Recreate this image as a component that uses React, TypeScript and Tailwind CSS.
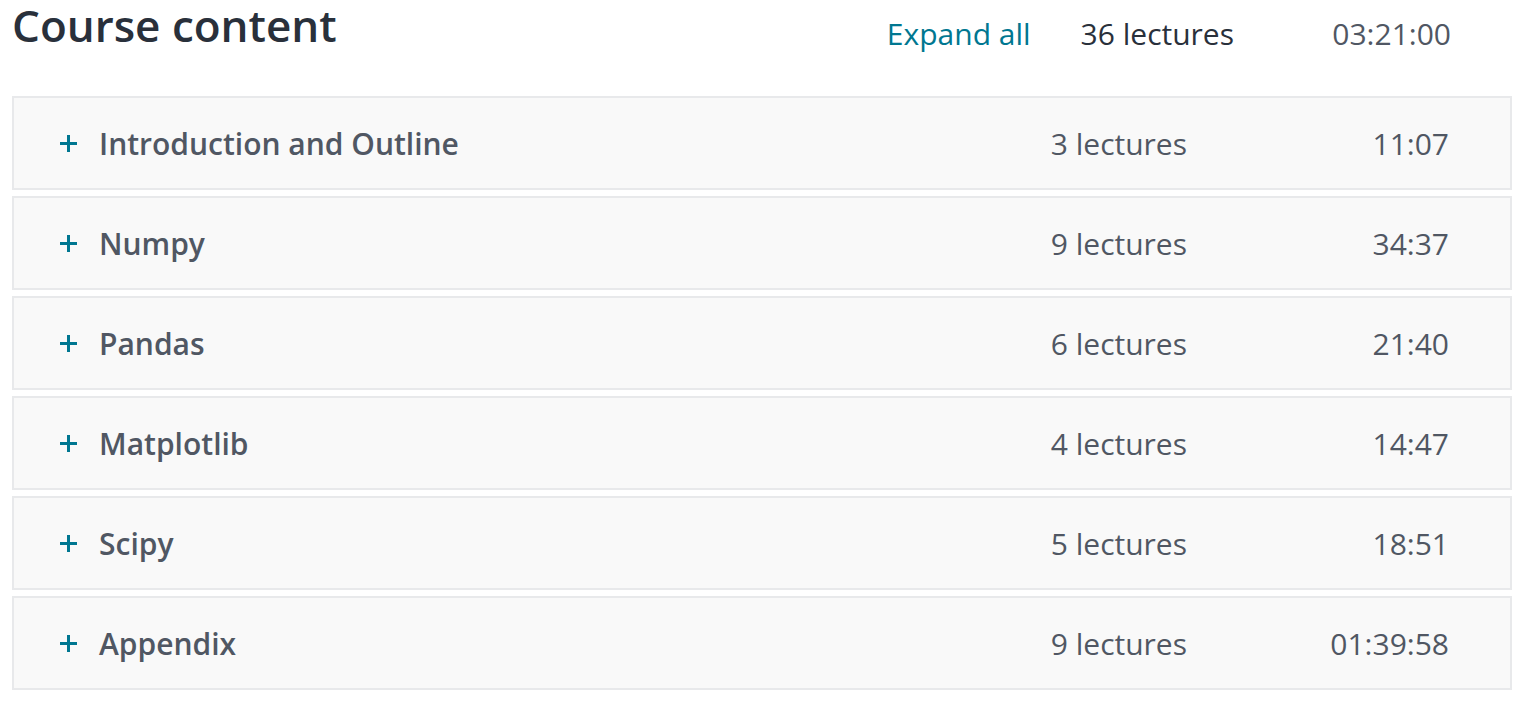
const sections = [
  { title: "Introduction and Outline", lectures: 3, time: "11:07" },
  { title: "Numpy", lectures: 9, time: "34:37" },
  { title: "Pandas", lectures: 6, time: "21:40" },
  { title: "Matplotlib", lectures: 4, time: "14:47" },
  { title: "Scipy", lectures: 5, time: "18:51" },
  { title: "Appendix", lectures: 9, time: "01:39:58" },
];

const PlusIcon = () => (
  <svg width="19" height="19" viewBox="0 0 19 19" className="shrink-0">
    <path d="M9.5 1v17M1 9.5h17" stroke="#007791" strokeWidth="3" />
  </svg>
);

export default function App() {
  return (
    <div className="w-full min-h-[714px] bg-white px-3 font-['Open_Sans',sans-serif]">
      <div className="flex h-[96px] items-start">
        <h2 className="text-[44px] leading-[60px] -mt-[5px] font-semibold text-[#29303b]">Course content</h2>
        <div className="ml-auto flex items-start pt-[13px] pr-[71px] text-[30px] leading-[42px]">
          <span className="text-[#007791]">Expand all</span>
          <span className="ml-[50px] text-[#29303b]">36 lectures</span>
          <span className="w-[217px] text-right text-[#505763]">03:21:00</span>
        </div>
      </div>

      <div className="flex flex-col gap-[6px]">
        {sections.map((s) => (
          <div
            key={s.title}
            className="flex h-[94px] w-[1500px] items-center border-2 border-[#e8e9eb] bg-[#f9f9f9] pl-[45px] pr-[61px] text-[30px] text-[#505763]"
          >
            <PlusIcon />
            <span className="ml-[21px] font-semibold">{s.title}</span>
            <span className="ml-auto">{s.lectures} lectures</span>
            <span className="w-[262px] text-right">{s.time}</span>
          </div>
        ))}
      </div>
    </div>
  );
}
